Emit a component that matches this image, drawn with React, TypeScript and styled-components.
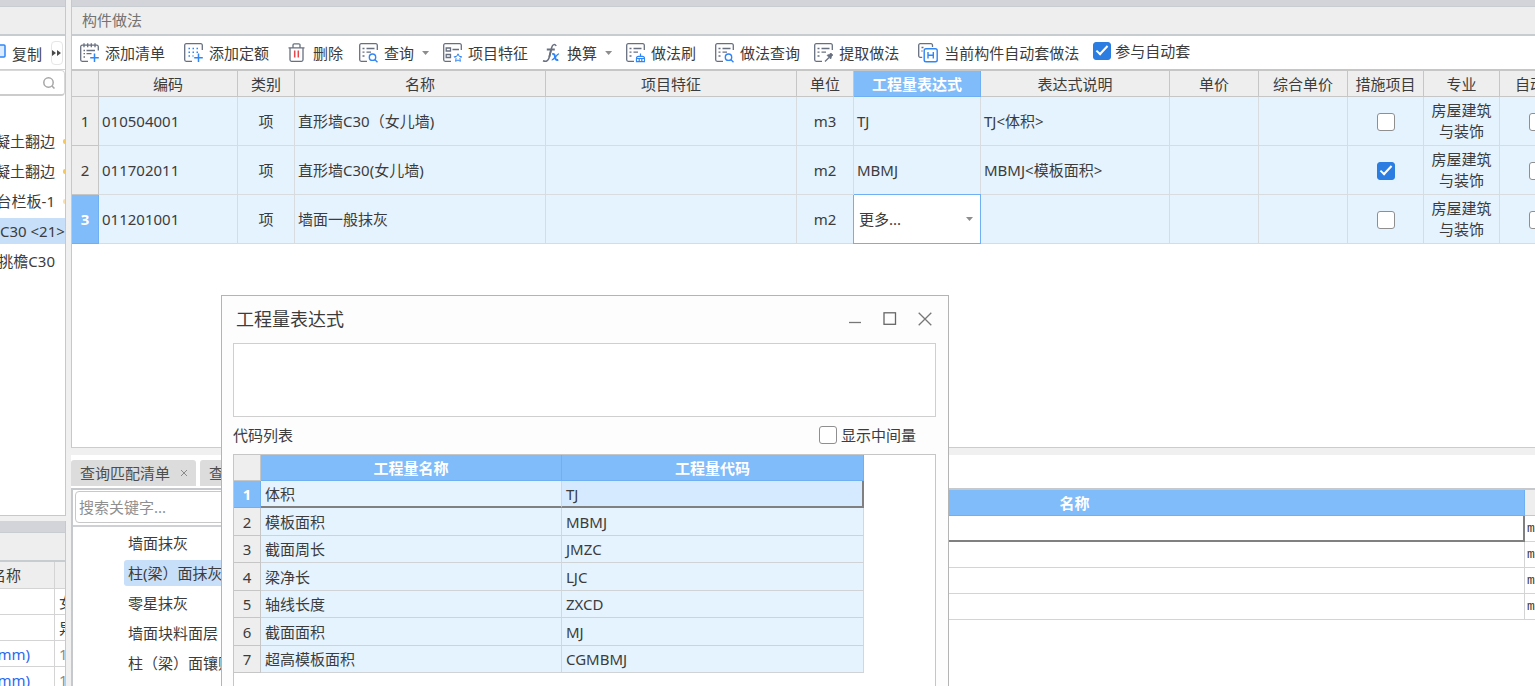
import React from "react";
import styled, { createGlobalStyle, css } from "styled-components";

const Global = createGlobalStyle`
  *, *::before, *::after { box-sizing: border-box; }
  html, body { margin: 0; }
  body, button, input, textarea, select {
    font-family: "Noto Sans", "Noto Sans CJK SC", sans-serif;
    font-size: 15px;
    line-height: 20px;
    color: #3c3c3c;
  }
  button { border: 0; padding: 0; background: none; }
`;

const Shell = styled.div`
  position: relative;
  display: flex;
  gap: 5px;
  height: 100vh;
  overflow: hidden;
  background: #f0f0f0;
`;

/* ---------- shared panel chrome ---------- */

const Strip = styled.div<{ $h: number }>`
  flex: none;
  height: ${(p) => p.$h}px;
  background: #d3d4da;
  border-bottom: 1px solid #c8cdd2;
`;

const PanelTitle = styled.h2`
  flex: none;
  height: 29px;
  margin: 0;
  padding: 3px 10px 0;
  background: #eeeeee;
  border-bottom: 2px solid #c7ccd0;
  font-size: 15px;
  line-height: 20px;
  font-weight: 400;
  color: #737373;
`;

/* ---------- left column ---------- */

const Side = styled.aside`
  flex: none;
  width: 66px;
  display: flex;
  flex-direction: column;
  gap: 5px;
  overflow: hidden;
`;

const SideUpper = styled.section`
  flex: 1;
  min-height: 0;
  display: flex;
  flex-direction: column;
  background: #fff;
  border-right: 1px solid #c6c9cc;
  border-bottom: 1px solid #c6c9cc;
`;

const SideLower = styled.section`
  flex: none;
  height: 165px;
  overflow: hidden;
  background: #fff;
  border-right: 1px solid #c6c9cc;
`;

const SideTools = styled.div`
  flex: none;
  display: flex;
  align-items: center;
  justify-content: flex-end;
  gap: 9px;
  height: 34px;
  padding: 0 2px 0 0;
  border-bottom: 1px solid #cfcfcf;
`;

const CopyButton = styled.button`
  display: flex;
  align-items: center;
  gap: 6px;
  white-space: nowrap;
  padding-top: 3px;
  svg { flex: none; margin-bottom: 6px; }
`;

const MoreButton = styled.button`
  width: 14px;
  height: 24px;
  display: flex;
  align-items: center;
  justify-content: center;
  border: 1px solid #e6e6e6;
  border-radius: 4px;
`;

const SideSearch = styled.div`
  flex: none;
  display: flex;
  align-items: center;
  height: 26px;
  padding-right: 8px;
  border-bottom: 2px solid #cccccc;
  border-top: 1px solid #d8d8d8;
  border-right: 1px solid #d8d8d8;
  border-radius: 0 4px 4px 0;
  input { flex: 1; min-width: 0; border: 0; outline: 0; background: none; padding: 0; height: 20px; }
`;

const Tree = styled.ul`
  list-style: none;
  margin: 0;
  padding: 30px 0 0;
`;

const TreeRow = styled.li<{ $selected?: boolean }>`
  display: flex;
  align-items: center;
  justify-content: ${(p) => (p.$selected ? "flex-start" : "flex-end")};
  gap: 8px;
  height: 30px;
  white-space: nowrap;
  overflow: hidden;
  background: ${(p) => (p.$selected ? "linear-gradient(#c8dff9, #c8dff9) center / 100% 26px no-repeat" : "none")};
`;

const Marker = styled.span<{ $color: string }>`
  flex: none;
  width: 2px;
  height: 5px;
  border-radius: 2px 0 0 2px;
  background: ${(p) => p.$color};
`;

const PropTable = styled.table`
  width: 100%;
  table-layout: fixed;
  border-collapse: separate;
  border-spacing: 0;
  th, td {
    height: 26px;
    padding: 0;
    border-right: 1px solid #d4d4d4;
    border-bottom: 1px solid #d4d4d4;
    font-weight: 400;
    white-space: nowrap;
    overflow: hidden;
    text-align: left;
  }
  th { height: 27px; background: #eeeeee; }
  th:last-child, td:last-child { border-right: 0; padding-left: 4px; }
`;

const Clip = styled.span<{ $tone?: string; $end: number }>`
  display: flex;
  justify-content: flex-end;
  padding-right: ${(p) => p.$end}px;
  color: ${(p) => p.$tone ?? "inherit"};
`;

const Muted = styled.span`
  color: #8a8a8a;
`;

/* ---------- main column ---------- */

const Main = styled.main`
  flex: 1;
  min-width: 0;
  display: flex;
  flex-direction: column;
`;

const Upper = styled.section`
  flex: 1;
  min-height: 0;
  display: flex;
  flex-direction: column;
  overflow: hidden;
  background: #fff;
  border-left: 1px solid #c6c9cc;
  border-bottom: 1px solid #cccccc;
`;

const Toolbar = styled.div`
  flex: none;
  display: flex;
  align-items: center;
  height: 35px;
  padding: 0 8px 3px;
  border-bottom: 2px solid #c6c6c6;
  white-space: nowrap;
`;

const Tool = styled.button<{ $space: number }>`
  flex: none;
  display: flex;
  align-items: center;
  gap: 6px;
  height: 30px;
  margin-left: ${(p) => p.$space}px;
  padding-top: 4px;
  svg { flex: none; }
`;

const Caret = styled.span`
  flex: none;
  width: 7px;
  height: 4px;
  margin-left: 2px;
  background: #8d8d8d;
  clip-path: polygon(0 0, 100% 0, 50% 100%);
`;

const CheckLabel = styled.label<{ $space?: number }>`
  display: flex;
  align-items: center;
  gap: 4px;
  margin-left: ${(p) => p.$space ?? 0}px;
`;

const Check = styled.input.attrs({ type: "checkbox" })`
  appearance: none;
  flex: none;
  display: inline-block;
  vertical-align: middle;
  width: 18px;
  height: 18px;
  margin: 0;
  border: 1px solid #8f8f8f;
  border-radius: 3px;
  background: #fff;
  &:checked {
    border-color: #2b7de2;
    background: #2b7de2;
  }
  &:checked::after {
    content: "";
    display: block;
    width: 12px;
    height: 6px;
    margin: 3px 0 0 2px;
    border-left: 2px solid #fff;
    border-bottom: 2px solid #fff;
    transform: rotate(-47deg);
  }
`;

const head = css`
  background: #eeeeee;
  font-weight: 400;
  text-align: center;
`;

const activeHead = css`
  background: #80bbfa;
  color: #fff;
  font-weight: 700;
  border-color: #6fb0f4;
`;

const Grid = styled.table`
  flex: none;
  table-layout: fixed;
  border-collapse: separate;
  border-spacing: 0;
  width: 1504px;
`;

const HeadCell = styled.th<{ $active?: boolean }>`
  ${head}
  height: 26px;
  padding: 0;
  border-right: 1px solid #c6c6c6;
  border-bottom: 1px solid #c6c6c6;
  white-space: nowrap;
  ${(p) => p.$active && activeHead}
`;

const RowHead = styled.th<{ $active?: boolean }>`
  ${head}
  padding: 0;
  border-right: 1px solid #c6c6c6;
  border-bottom: 1px solid #c6c6c6;
  ${(p) => p.$active && activeHead}
`;

const Cell = styled.td<{ $center?: boolean; $editing?: boolean }>`
  height: 49px;
  padding: 0 3px;
  line-height: 21px;
  background: #e5f3ff;
  border-right: 1px solid #d9dcde;
  border-bottom: 1px solid #d9dcde;
  text-align: ${(p) => (p.$center ? "center" : "left")};
  ${(p) =>
    p.$editing &&
    css`
      padding: 0;
      background: #fff;
      border-color: #6fb0f4;
      box-shadow: -1px 0 #6fb0f4, 0 -1px #6fb0f4;
    `}
`;

const SelectWrap = styled.div`
  display: flex;
  align-items: center;
  padding-right: 7px;
`;

const CellSelect = styled.select`
  flex: 1;
  min-width: 0;
  appearance: none;
  height: 46px;
  padding: 0 5px;
  border: 0;
  outline: 0;
  background: none;
`;

/* ---------- lower area ---------- */

const Lower = styled.section`
  flex: none;
  height: 238px;
  display: flex;
  flex-direction: column;
  padding-top: 7px;
`;

const Tabs = styled.div`
  flex: none;
  display: flex;
  align-items: flex-end;
  gap: 4px;
  height: 33px;
  padding-bottom: 2px;
  background: #fff;
`;

const Tab = styled.div`
  display: flex;
  align-items: center;
  gap: 10px;
  height: 26px;
  padding: 0 8px 0 9px;
  border-radius: 3px 3px 0 0;
  background: #dcdcdc;
  white-space: nowrap;
  button { color: #4d4d4d; height: 20px; display: flex; align-items: center; }
`;

const LowerBody = styled.div`
  flex: 1;
  min-height: 0;
  display: flex;
  background: #fff;
  border-left: 2px solid #c6c9cc;
  border-top: 2px solid #c6c9cc;
`;

const Finder = styled.div`
  flex: none;
  width: 552px;
  overflow: hidden;
  border-right: 1px solid #c6c9cc;
`;

const FinderBox = styled.div`
  padding: 1px 2px 2px;
  border-bottom: 2px solid #cfd0d4;
  input {
    width: 100%;
    height: 32px;
    padding: 0 3px;
    border: 1px solid #c8c8c8;
    border-radius: 4px;
    outline: 0;
  }
  input::placeholder { color: #8f8f8f; opacity: 1; }
`;

const FinderList = styled.ul`
  display: flex;
  flex-direction: column;
  align-items: flex-start;
  gap: 4px;
  list-style: none;
  margin: 0;
  padding: 3px 0 0 51px;
`;

const FinderItem = styled.li<{ $selected?: boolean }>`
  height: 26px;
  padding: 3px 4px;
  border-radius: 3px;
  white-space: nowrap;
  background: ${(p) => (p.$selected ? "#c8dff9" : "none")};
`;

const Results = styled.div`
  flex: 1;
  min-width: 0;
  overflow: hidden;
`;

const ResultTable = styled.table`
  width: 100%;
  table-layout: fixed;
  border-collapse: separate;
  border-spacing: 0;
  td {
    height: 26px;
    padding: 0 0 0 2px;
    border-right: 1px solid #d4d4d4;
    border-bottom: 1px solid #d4d4d4;
    font-family: "Liberation Mono", monospace;
    font-size: 13px;
    white-space: nowrap;
    overflow: hidden;
  }
  td:last-child, th:last-child { border-right: 0; }
  tr[data-current] td:first-child {
    border-right: 2px solid #808080;
    border-bottom: 2px solid #808080;
  }
`;

/* ---------- dialog ---------- */

const Dialog = styled.div`
  position: absolute;
  left: 221px;
  top: 295px;
  width: 728px;
  height: 440px;
  display: flex;
  flex-direction: column;
  padding: 0 12px 12px 11px;
  border: 1px solid #b4b4b4;
  background: #fdfdfd;
`;

const DialogBar = styled.div`
  display: flex;
  align-items: center;
  height: 47px;
  padding: 0 4px 1px 3px;
  h1 {
    flex: 1;
    margin: 0;
    font-size: 18px;
    line-height: 24px;
    font-weight: 400;
  }
`;

const WindowButtons = styled.div`
  display: flex;
  gap: 21px;
  button { display: flex; }
`;

const Expression = styled.textarea`
  display: block;
  flex: none;
  width: 100%;
  height: 74px;
  border: 1px solid #cfcfcf;
  outline: 0;
  resize: none;
  background: #fff;
`;

const ListBar = styled.div`
  display: flex;
  align-items: center;
  justify-content: space-between;
  height: 37px;
  padding: 0 20px 1px 0;
`;

const CodeBox = styled.div`
  flex: 1;
  border: 1px solid #c6c6c6;
  background: #fff;
`;

const CodeTable = styled.table`
  width: 630px;
  table-layout: fixed;
  border-collapse: separate;
  border-spacing: 0;
  tbody tr { height: 28px; }
  tbody tr:nth-child(odd) { height: 27px; }
`;

const CodeCell = styled.td<{ $current?: boolean; $tint?: boolean }>`
  padding: 0 4px;
  background: ${(p) => (p.$tint ? "#d6eaff" : "#e5f3ff")};
  border-right: 1px solid #cfd8de;
  border-bottom: ${(p) => (p.$current ? "2px solid #808080" : "1px solid #cfd3d6")};
  ${(p) => p.$tint && css`border-right: 2px solid #808080;`}
`;

/* ---------- icons ---------- */

const GREY = "#687080";
const BLUE = "#2f86f6";

function Svg({ children, w = 19 }: { children: React.ReactNode; w?: number }) {
  return (
    <svg width={w} height="20" viewBox={`0 0 ${w} 20`} fill="none" stroke={GREY} strokeWidth="1.3" aria-hidden="true">
      {children}
    </svg>
  );
}

const Frame = () => (
  <path d="M18.300 7V2.200a1.500 1.500 0 0 0-1.500-1.500H2.200A1.500 1.500 0 0 0 .7 2.200v14.600a1.500 1.500 0 0 0 1.500 1.500H8" />
);
const Lines = () => <path d="M3.500 5.500h2M7.500 5.500h8M3.500 9.200h2M7.500 9.200h4.500M3.500 13h2" />;
const Plus = () => <path d="M14.500 10.500v8.500M10.200 14.700h8.600" stroke={BLUE} strokeWidth="1.500" />;
const Lens = () => (
  <g stroke={BLUE} strokeWidth="1.400">
    <circle cx="13.500" cy="14.200" r="3.200" />
    <path d="M15.800 16.500l2.700 2.700" />
  </g>
);

const AddList = () => (
  <Svg>
    <path d="M18.300 7.500V3.700a1.500 1.500 0 0 0-1.500-1.500H2.200A1.500 1.500 0 0 0 .7 3.700v13.100a1.500 1.500 0 0 0 1.500 1.500H8" />
    <path d="M4 .3v4M7.700.3v4M11.300.3v4M15 .3v4M3.500 7.500h1.500M6.500 7.500h8.500M3.500 10.700h1.500M6.500 10.700h5M3.500 14h1.500" />
    <Plus />
  </Svg>
);
const AddQuota = () => (
  <Svg>
    <Frame />
    <path d="M4.500 5.500h1.500M8.500 5.500h1.500M12.500 5.500h1.500M4.500 9.200h1.500M8.500 9.200h1.500M12.500 9.200h1.500M4.500 13h1.500M8.500 13h1" stroke={BLUE} strokeWidth="1.500" />
    <Plus />
  </Svg>
);
const Trash = () => (
  <Svg>
    <path d="M.5 4.800h16M5 4.800V2A1.200 1.200 0 0 1 6.200.8h4.600A1.200 1.200 0 0 1 12 2v2.800M2 4.800v12a1.500 1.500 0 0 0 1.500 1.500h10a1.500 1.500 0 0 0 1.500-1.500v-12" />
    <path d="M6.700 7.500v7M10.300 7.500v7" stroke="#e5484d" strokeWidth="1.500" />
  </Svg>
);
const Query = () => (
  <Svg>
    <Frame />
    <Lines />
    <Lens />
  </Svg>
);
const Feature = () => (
  <Svg>
    <Frame />
    <path d="M3.200 5h4.300v3H3.200zM3.200 11.500h4.300v3H3.200zM9.500 6.500h6.500" />
    <path d="M15 10.800l1.200 2.500 2.600.4-1.900 1.900.5 2.700-2.400-1.300-2.400 1.300.5-2.700-1.900-1.900 2.600-.4z" stroke={BLUE} strokeWidth="1" />
  </Svg>
);
const Fx = () => (
  <Svg>
    <path d="M14.200 3C13 .8 10.600 1 9.700 4.500L7 15c-.8 3-3.200 4-6 2.700" strokeWidth="1.500" />
    <path d="M9.300 6L7.300 14M4.800 6.500h8" strokeWidth="1.800" />
    <path d="M10.200 11.200c2-.6 2.400.4 2.900 2.800s.9 3.500 3.200 2.800" stroke={BLUE} strokeWidth="1.900" />
    <path d="M17 11c-2-.5-5 6.300-7.300 5.800" stroke={BLUE} strokeWidth="1.300" />
  </Svg>
);
const Brush = () => (
  <Svg>
    <Frame />
    <Lines />
    <path d="M14.500 10.500v2.500M10.500 18.600v-3.200a2 2 0 0 1 2-2h4a2 2 0 0 1 2 2v3.200zM10.500 15.500h8M13.200 15.800v2.800M15.800 15.800v2.800" stroke={BLUE} strokeWidth="1.200" />
  </Svg>
);
const Extract = () => (
  <Svg>
    <Frame />
    <Lines />
    <path d="M11 18.500l4-4" />
    <path d="M13 12.300l3.700 3.700.8-2.500 1.300-1.500-2-2-1.500 1.500z" fill={GREY} strokeWidth=".8" />
  </Svg>
);
const AutoApply = () => (
  <Svg w={20}>
    <path d="M14.500 4V2.200A1.500 1.500 0 0 0 13 .7H2.200A1.500 1.500 0 0 0 .7 2.200v10.600a1.500 1.500 0 0 0 1.500 1.500h2M3.500 4.500h2M3.500 8h1" />
    <rect x="6.200" y="5.700" width="13" height="13" rx="1.800" stroke={BLUE} strokeWidth="1.400" />
    <path d="M10 9v6.500M15.300 9v6.500M10 12.200h5.300" stroke={BLUE} strokeWidth="1.400" />
  </Svg>
);

/* ---------- data ---------- */

const tools = [
  { label: "添加清单", icon: AddList, space: 0 },
  { label: "添加定额", icon: AddQuota, space: 19 },
  { label: "删除", icon: Trash, space: 19 },
  { label: "查询", icon: Query, space: 16, menu: true },
  { label: "项目特征", icon: Feature, space: 14 },
  { label: "换算", icon: Fx, space: 14, menu: true },
  { label: "做法刷", icon: Brush, space: 14 },
  { label: "做法查询", icon: Query, space: 19 },
  { label: "提取做法", icon: Extract, space: 14 },
  { label: "当前构件自动套做法", icon: AutoApply, space: 19 },
];

const columns: [string, number][] = [
  ["编码", 139],
  ["类别", 57],
  ["名称", 251],
  ["项目特征", 251],
  ["单位", 57],
  ["工程量表达式", 127],
  ["表达式说明", 189],
  ["单价", 89],
  ["综合单价", 89],
  ["措施项目", 76],
  ["专业", 76],
  ["自动套", 76],
];

const items = [
  { code: "010504001", name: "直形墙C30（女儿墙)", unit: "m3", expr: "TJ", note: "TJ<体积>", measure: false },
  { code: "011702011", name: "直形墙C30(女儿墙)", unit: "m2", expr: "MBMJ", note: "MBMJ<模板面积>", measure: true },
  { code: "011201001", name: "墙面一般抹灰", unit: "m2", expr: null, note: "", measure: false },
];

const codes = [
  ["体积", "TJ"],
  ["模板面积", "MBMJ"],
  ["截面周长", "JMZC"],
  ["梁净长", "LJC"],
  ["轴线长度", "ZXCD"],
  ["截面面积", "MJ"],
  ["超高模板面积", "CGMBMJ"],
];

const finderItems = ["墙面抹灰", "柱(梁）面抹灰", "零星抹灰", "墙面块料面层", "柱（梁）面镶贴块料", "镶贴零星块料"];

/* ---------- page ---------- */

function SidePanels() {
  return (
    <Side>
      <SideUpper>
        <Strip $h={7} />
        <PanelTitle />
        <SideTools>
          <CopyButton type="button">
            <svg width="12" height="16" viewBox="0 0 12 16" fill="#dcebff" stroke={BLUE} strokeWidth="1.500" aria-hidden="true">
              <rect x="-2" y="2" width="13" height="12" rx="1" />
            </svg>
            复制
          </CopyButton>
          <MoreButton type="button" aria-label="更多工具">
            <svg width="10" height="6" viewBox="0 0 10 6" fill="#4a4a4a" aria-hidden="true">
              <path d="M0 0l4 3-4 3zM5 0l4 3-4 3z" />
            </svg>
          </MoreButton>
        </SideTools>
        <SideSearch>
          <input aria-label="搜索构件" />
          <svg width="14" height="14" viewBox="0 0 14 14" fill="none" stroke="#a6a6a6" strokeWidth="1.500" aria-hidden="true">
            <circle cx="6.500" cy="6.500" r="4.700" />
            <path d="M10 10l2.500 2.500" />
          </svg>
        </SideSearch>
        <Tree>
          <TreeRow>凝土翻边<Marker $color="#f5c860" /></TreeRow>
          <TreeRow>凝土翻边<Marker $color="#f5c860" /></TreeRow>
          <TreeRow>台栏板-1<Marker $color="#f9dfb0" /></TreeRow>
          <TreeRow $selected>C30 &lt;21&gt;</TreeRow>
          <TreeRow>挑檐C30<Marker $color="transparent" /></TreeRow>
        </Tree>
      </SideUpper>
      <SideLower>
        <Strip $h={12} />
        <PanelTitle />
        <PropTable>
          <colgroup>
            <col width="55" />
            <col />
          </colgroup>
          <thead>
            <tr>
              <th><Clip $end={33}>名称</Clip></th>
              <th />
            </tr>
          </thead>
          <tbody>
            <tr><td /><td>女儿墙</td></tr>
            <tr><td /><td>异形</td></tr>
            <tr><td><Clip $end={24} $tone="#2b68f0">(mm)</Clip></td><td><Muted>100</Muted></td></tr>
            <tr><td><Clip $end={24} $tone="#2b68f0">(mm)</Clip></td><td><Muted>100</Muted></td></tr>
          </tbody>
        </PropTable>
      </SideLower>
    </Side>
  );
}

function ItemGrid() {
  return (
    <Grid>
      <colgroup>
        <col width="27" />
        {columns.map(([label, width]) => <col key={label} width={width} />)}
      </colgroup>
      <thead>
        <tr>
          <HeadCell />
          {columns.map(([label]) => (
            <HeadCell key={label} $active={label === "工程量表达式"}>{label}</HeadCell>
          ))}
        </tr>
      </thead>
      <tbody>
        {items.map((item, i) => (
          <tr key={item.code}>
            <RowHead $active={i === 2}>{i + 1}</RowHead>
            <Cell>{item.code}</Cell>
            <Cell $center>项</Cell>
            <Cell>{item.name}</Cell>
            <Cell />
            <Cell $center>{item.unit}</Cell>
            {item.expr ? (
              <Cell>{item.expr}</Cell>
            ) : (
              <Cell $editing>
                <SelectWrap>
                  <CellSelect aria-label="工程量表达式">
                    <option>更多...</option>
                  </CellSelect>
                  <Caret />
                </SelectWrap>
              </Cell>
            )}
            <Cell>{item.note}</Cell>
            <Cell />
            <Cell />
            <Cell $center><Check aria-label="措施项目" defaultChecked={item.measure} /></Cell>
            <Cell $center>房屋建筑与装饰</Cell>
            <Cell $center><Check aria-label="自动套" /></Cell>
          </tr>
        ))}
      </tbody>
    </Grid>
  );
}

function ExpressionDialog() {
  return (
    <Dialog role="dialog" aria-labelledby="expr-title">
      <DialogBar>
        <h1 id="expr-title">工程量表达式</h1>
        <WindowButtons>
          <button type="button" aria-label="最小化">
            <svg width="14" height="14" viewBox="0 0 14 14" stroke="#777" fill="none"><path d="M1 10.500h12" strokeWidth="1.300" /></svg>
          </button>
          <button type="button" aria-label="最大化">
            <svg width="14" height="14" viewBox="0 0 14 14" stroke="#666" fill="none"><rect x="1" y=".8" width="11.500" height="11.500" strokeWidth="1.300" /></svg>
          </button>
          <button type="button" aria-label="关闭">
            <svg width="14" height="14" viewBox="0 0 14 14" stroke="#777" fill="none"><path d="M.7.700l12.600 12.600M13.300.700L.7 13.300" strokeWidth="1.300" /></svg>
          </button>
        </WindowButtons>
      </DialogBar>
      <Expression aria-label="表达式" />
      <ListBar>
        <span>代码列表</span>
        <CheckLabel><Check />显示中间量</CheckLabel>
      </ListBar>
      <CodeBox>
        <CodeTable>
          <colgroup>
            <col width="27" />
            <col width="301" />
            <col width="302" />
          </colgroup>
          <thead>
            <tr>
              <HeadCell />
              <HeadCell $active>工程量名称</HeadCell>
              <HeadCell $active>工程量代码</HeadCell>
            </tr>
          </thead>
          <tbody>
            {codes.map(([name, code], i) => (
              <tr key={code}>
                <RowHead $active={i === 0}>{i + 1}</RowHead>
                <CodeCell $current={i === 0}>{name}</CodeCell>
                <CodeCell $current={i === 0} $tint={i === 0}>{code}</CodeCell>
              </tr>
            ))}
          </tbody>
        </CodeTable>
      </CodeBox>
    </Dialog>
  );
}

export default function App() {
  return (
    <Shell>
      <Global />
      <SidePanels />
      <Main>
        <Upper>
          <Strip $h={7} />
          <PanelTitle>构件做法</PanelTitle>
          <Toolbar>
            {tools.map(({ label, icon: Icon, space, menu }) => (
              <Tool key={label} type="button" $space={space}>
                <Icon />
                {label}
                {menu && <Caret />}
              </Tool>
            ))}
            <CheckLabel $space={14}><Check defaultChecked />参与自动套</CheckLabel>
          </Toolbar>
          <ItemGrid />
        </Upper>
        <Lower>
          <Tabs>
            <Tab>
              <button type="button">查询匹配清单</button>
              <button type="button" aria-label="关闭标签">
                <svg width="8" height="8" viewBox="0 0 8 8" stroke="#8a8a8a" aria-hidden="true"><path d="M1 1l6 6M7 1L1 7" /></svg>
              </button>
            </Tab>
            <Tab>
              <button type="button">查询匹配定额</button>
            </Tab>
          </Tabs>
          <LowerBody>
            <Finder>
              <FinderBox><input placeholder="搜索关键字..." aria-label="搜索关键字" /></FinderBox>
              <FinderList>
                {finderItems.map((label, i) => (
                  <FinderItem key={label} $selected={i === 1}>{label}</FinderItem>
                ))}
              </FinderList>
            </Finder>
            <Results>
              <ResultTable>
                <colgroup>
                  <col />
                  <col width="10" />
                </colgroup>
                <thead>
                  <tr><HeadCell $active>名称</HeadCell><HeadCell /></tr>
                </thead>
                <tbody>
                  {[0, 1, 2, 3].map((i) => (
                    <tr key={i} data-current={i === 0 ? "" : undefined}><td /><td>m2</td></tr>
                  ))}
                </tbody>
              </ResultTable>
            </Results>
          </LowerBody>
        </Lower>
      </Main>
      <ExpressionDialog />
    </Shell>
  );
}
